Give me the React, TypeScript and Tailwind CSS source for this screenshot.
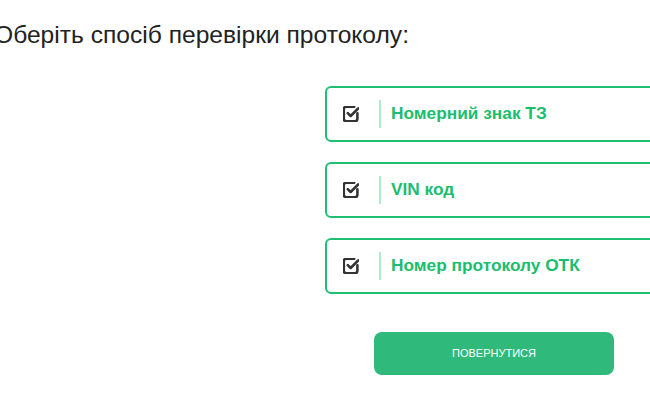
import React from "react";

const options = ["Номерний знак ТЗ", "VIN код", "Номер протоколу ОТК"];

function CheckIcon() {
  return (
    <svg width="16" height="16" viewBox="2 2 20 20" fill="none" stroke="#333333" strokeWidth="3.2" strokeLinecap="round" strokeLinejoin="round">
      <path d="M20 11v7a3 3 0 0 1-3 3H6a3 3 0 0 1-3-3V6a3 3 0 0 1 3-3h10" />
      <path d="M8 11l3.5 3.5L21 5" />
    </svg>
  );
}

export default function App() {
  return (
    <div className="w-[650px] h-[420px] overflow-hidden bg-white" style={{ fontFamily: '"Liberation Sans", Arial, sans-serif' }}>
      <h1 className="ml-[-6px] pt-[20px] text-[24.6px] leading-[30px] text-[#222222] whitespace-nowrap">
        Оберіть спосіб перевірки протоколу:
      </h1>
      <div className="ml-[325px] mt-[36px] w-[338px] flex flex-col gap-[20px]">
        {options.map((o) => (
          <button
            key={o}
            className="h-[56px] w-full flex items-center border-2 border-[#20c073] rounded-[6px] bg-white text-left"
          >
            <span className="w-[52px] pl-[16px] flex items-center">
              <CheckIcon />
            </span>
            <span className="w-[2px] h-[28px] bg-[#a8ecc8]" />
            <span className="pl-[10px] text-[17.3px] font-bold text-[#1bbd6e]">{o}</span>
          </button>
        ))}
        <div className="flex justify-center mt-[18px]">
          <button className="w-[240px] h-[43px] rounded-[8px] bg-[#2fb97b] text-white text-[11px] uppercase">
            Повернутися
          </button>
        </div>
      </div>
    </div>
  );
}
